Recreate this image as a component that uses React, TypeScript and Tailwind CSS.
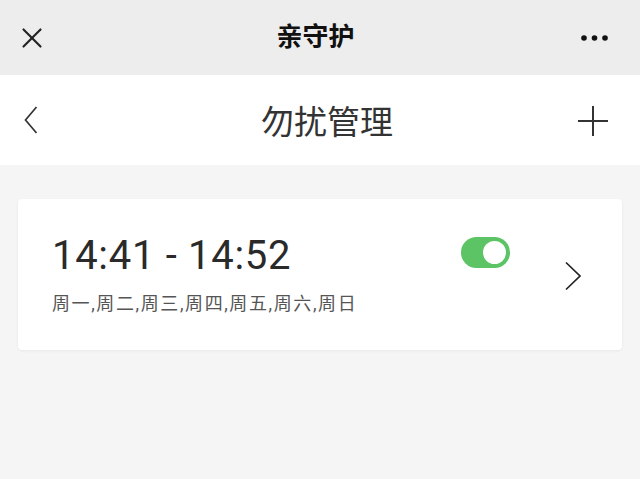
import { X } from "lucide-react";

const cjk = { fontFamily: 'Roboto, "Noto Sans CJK SC", sans-serif' };

export default function App() {
  return (
    <div className="flex h-[479px] w-[640px] flex-col bg-[#f5f5f5]" style={cjk}>
      {/* top bar */}
      <div className="flex h-[75px] items-center bg-[#ededed] pl-[15px] pr-[30px]">
        <X className="h-[34px] w-[34px] text-[#222]" strokeWidth={1.5} />
        <h1 className="flex-1 pl-[2px] text-center text-[26px] font-bold text-[#111]">亲守护</h1>
        <svg width="30" height="8" viewBox="0 0 30 8" className="text-[#111]">
          <circle cx="4" cy="4" r="2.8" fill="currentColor" />
          <circle cx="14.5" cy="4" r="2.8" fill="currentColor" />
          <circle cx="25" cy="4" r="2.8" fill="currentColor" />
        </svg>
      </div>

      {/* page header */}
      <div className="flex h-[90px] items-center bg-white pl-[24px] pr-[32px]">
        <svg width="14" height="30" viewBox="0 0 14 30" className="text-[#333]">
          <path d="M12.5 2 L1.5 15 L12.5 28" fill="none" stroke="currentColor" strokeWidth="1.7" />
        </svg>
        <h2 className="flex-1 pl-[38px] pt-[6px] text-center text-[33px] text-[#333]">勿扰管理</h2>
        <svg width="30" height="30" viewBox="0 0 30 30" className="mt-[2px] text-[#333]">
          <path d="M15 0 V30 M0 15 H30" fill="none" stroke="currentColor" strokeWidth="2" />
        </svg>
      </div>

      {/* rule card */}
      <div className="mx-[18px] mt-[34px] flex h-[151px] items-center rounded-[4px] bg-white pl-[34px] pr-[40px] shadow-[0_1px_3px_rgba(0,0,0,0.06)]">
        <div className="flex flex-1 flex-col">
          <div className="text-[40px] leading-[48px] tracking-[0.7px] text-[#2a2a2a]">14:41 - 14:52</div>
          <div className="mt-[10px] text-[18px] tracking-[1.6px] text-[#555]">周一,周二,周三,周四,周五,周六,周日</div>
        </div>
        <div className="flex h-full flex-col justify-start pt-[38px]">
          <div className="flex h-[31px] w-[49px] items-center justify-end rounded-full bg-[#5cc465] pr-[2px]">
            <div className="h-[27px] w-[27px] rounded-full border-[2px] border-[#5cc465] bg-white" />
          </div>
        </div>
        <svg width="18" height="30" viewBox="0 0 18 30" className="ml-[54px] mt-[2px] text-[#222]">
          <path d="M2 1.5 L16 15 L2 28.5" fill="none" stroke="currentColor" strokeWidth="1.7" />
        </svg>
      </div>
    </div>
  );
}
